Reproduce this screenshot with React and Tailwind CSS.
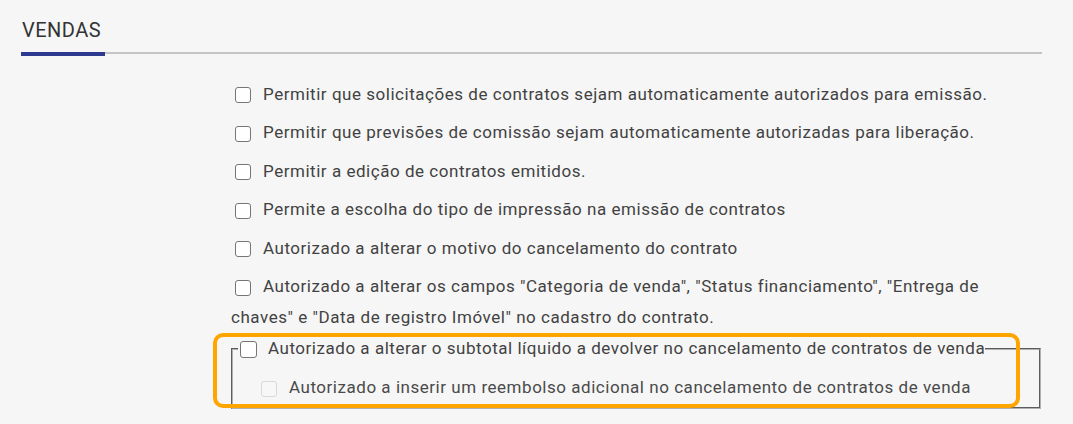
import React from 'react';

// Fake checkbox matching the look of the screenshot
const Box = ({ disabled = false, size = 'md' }) => {
  const sizeClass = size === 'lg' ? 'w-[17px] h-[17px]' : 'w-4 h-4';
  const colorClass = disabled
    ? 'border-[#d9d9d9] bg-[#f7f7f7]'
    : 'border-[#767676] bg-white';
  return (
    <span
      className={`inline-block align-middle ${sizeClass} rounded-[3px] border-[1.5px] ${colorClass}`}
    />
  );
};

const options = [
  'Permitir que solicitações de contratos sejam automaticamente autorizados para emissão.',
  'Permitir que previsões de comissão sejam automaticamente autorizadas para liberação.',
  'Permitir a edição de contratos emitidos.',
  'Permite a escolha do tipo de impressão na emissão de contratos',
  'Autorizado a alterar o motivo do cancelamento do contrato',
];

const Row = ({ children, className = '' }) => (
  <div className={`leading-[31px] mb-[7.6px] ${className}`}>
    <span className="ml-1 mr-3">
      <Box />
    </span>
    {children}
  </div>
);

export default function App() {
  return (
    <div className="min-h-screen bg-[#f6f6f6] font-['Roboto',sans-serif] text-[#424242]">
      {/* Section header */}
      <div className="ml-[21px] w-[1021px] pt-[18px] flex items-end">
        <div className="w-[84px] pl-px pb-[10px] text-[20px] leading-[24px] tracking-[0.5px] text-[#333] border-b-4 border-[#2e3a8f]">
          VENDAS
        </div>
        <div className="flex-1 mb-[2px] border-b-2 border-[#c4c4c4]" />
      </div>

      {/* Options */}
      <div className="ml-[231px] w-[810px] mt-[22.5px] text-[17px] tracking-[0.53px]">
        {options.map((text) => (
          <Row key={text}>{text}</Row>
        ))}

        <div className="leading-[31px] mb-0">
          <span className="ml-1 mr-3">
            <Box />
          </span>
          Autorizado a alterar os campos "Categoria de venda", "Status financiamento", "Entrega de
          <br />
          chaves" e "Data de registro Imóvel" no cadastro do contrato.
        </div>

        <div className="relative">
          <fieldset className="border-2 [border-style:groove] border-[#b0b0b0] pl-[5px] pb-[3.5px]">
            <legend className="leading-[31px] pl-[2px]">
              <span className="mr-[11px]">
                <Box size="lg" />
              </span>
              Autorizado a alterar o subtotal líquido a devolver no cancelamento de contratos de venda
            </legend>
            <div className="leading-[31px] mt-2 pl-[23px] text-[#4a4a4a]">
              <span className="mr-3">
                <Box disabled />
              </span>
              Autorizado a inserir um reembolso adicional no cancelamento de contratos de venda
            </div>
          </fieldset>

          {/* highlight annotation */}
          <div className="absolute -left-[18px] top-0 w-[807px] h-[75px] border-4 border-[#ffa500] rounded-[10px] pointer-events-none" />
        </div>
      </div>
    </div>
  );
}
